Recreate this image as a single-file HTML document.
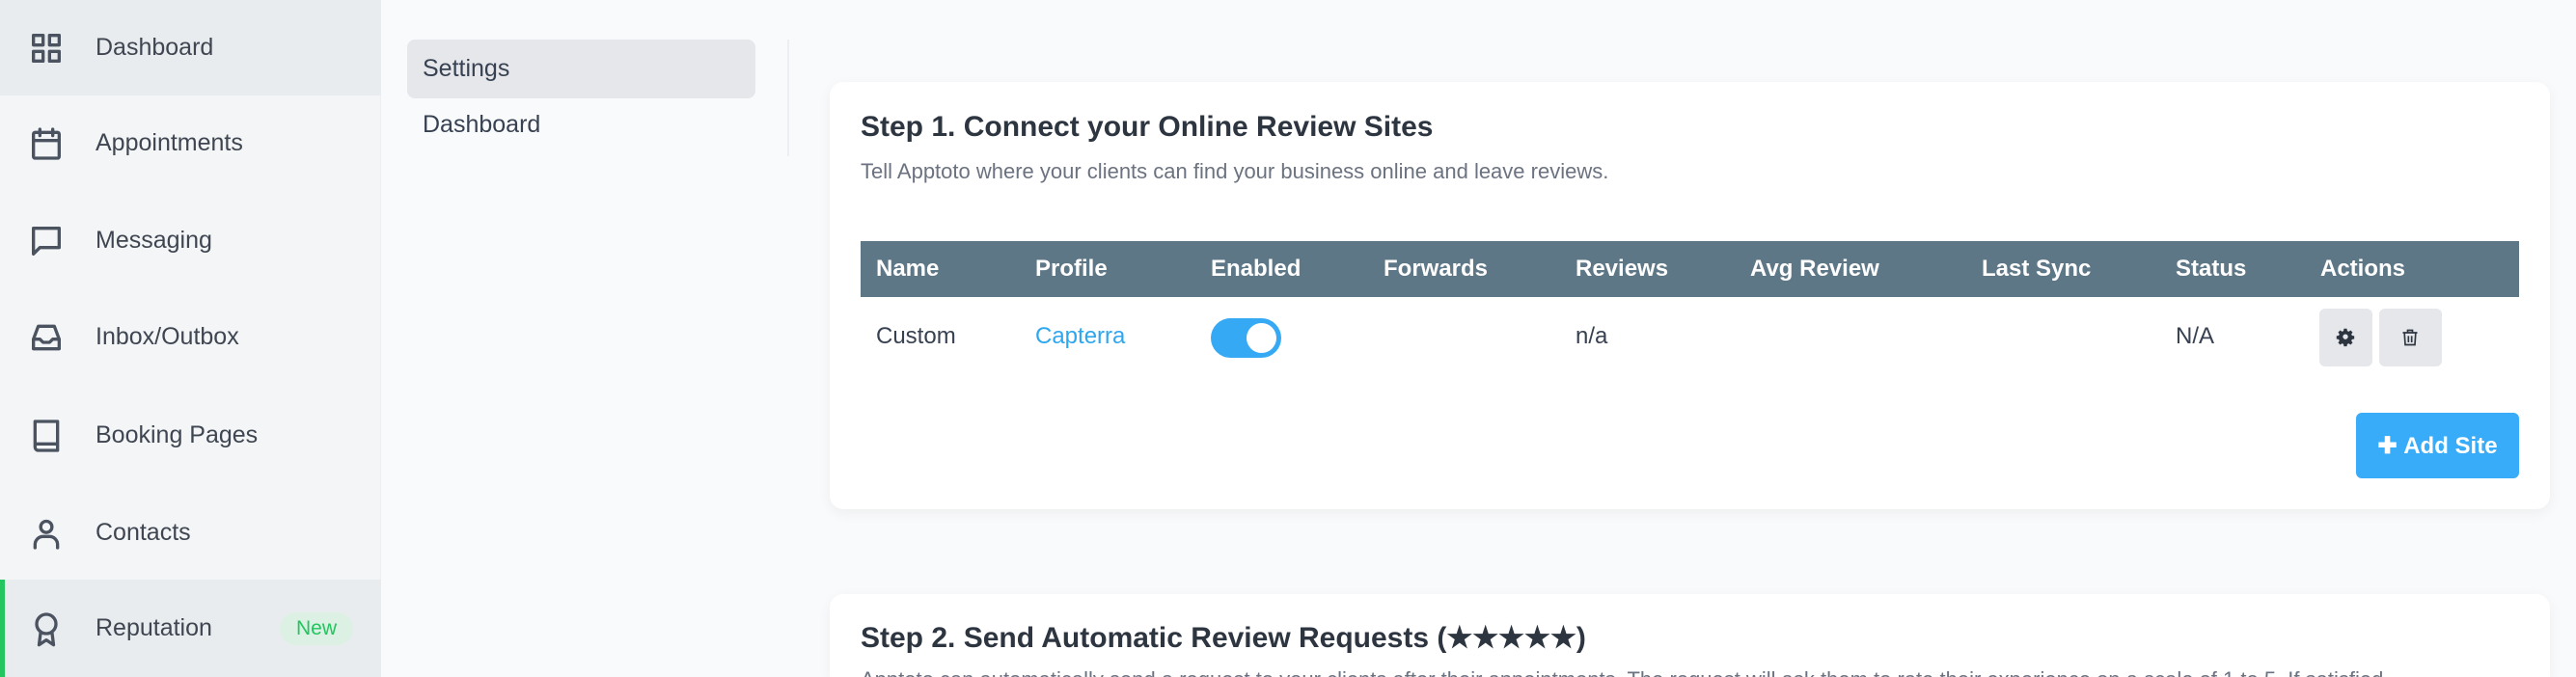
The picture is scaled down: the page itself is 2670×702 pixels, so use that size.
<!DOCTYPE html>
<html style="height:702px;overflow:hidden"><head><meta charset="utf-8"><style>
*{box-sizing:border-box;margin:0;padding:0}
body{width:2670px;height:702px;overflow:hidden;background:#f9fafb;font-family:"Liberation Sans",sans-serif;color:#374151;position:relative}
.side{position:absolute;left:0;top:0;width:395px;height:702px;background:#f3f5f7;border-right:1px solid #eceef1}
.item{position:absolute;left:0;width:395px;height:101px;display:flex;align-items:center;font-size:25px;color:#3f4651}
.item svg{position:absolute;left:28px;width:40px;height:40px;fill:none;stroke:#4b5360;stroke-width:2;stroke-linecap:round;stroke-linejoin:round}
.item span{position:absolute;left:99px}
.act{background:#e9ecef}
.badge{position:absolute;left:290px;width:76px;height:34px;border-radius:17px;background:#dcf1e3;color:#22c55e;font-size:21px;display:flex;align-items:center;justify-content:center}
.sub{position:absolute;left:422px;width:361px;height:61px;border-radius:8px;font-size:25px;display:flex;align-items:center;padding-left:16px;color:#374151}
.card{position:absolute;left:860px;width:1783px;background:#fff;border-radius:14px;box-shadow:0 4px 14px rgba(0,0,0,.05)}
h2{position:absolute;left:32px;font-size:30px;font-weight:bold;color:#2d3540}
.p{position:absolute;left:32px;font-size:22px;color:#6b7280}
.th{position:absolute;left:32px;top:165px;width:1719px;height:58px;background:#5e7787}
.th span{position:absolute;top:15px;font-size:24px;font-weight:bold;color:#fff}
.td{position:absolute;font-size:24px;color:#374151}
.btn{position:absolute;top:235px;height:60px;border-radius:6px;background:#e5e7eb}
</style></head><body>
<div class="side">
<div class="item act" style="top:0;height:99px"><svg viewBox="0 0 24 24"><rect x="4" y="4" width="6" height="6"/><rect x="14" y="4" width="6" height="6"/><rect x="4" y="14" width="6" height="6"/><rect x="14" y="14" width="6" height="6"/></svg><span>Dashboard</span></div>
<div class="item" style="top:98px"><svg viewBox="0 0 24 24"><rect x="4" y="5" width="16" height="16" rx="1"/><path d="M8 3v4M16 3v4M4 10h16"/></svg><span>Appointments</span></div>
<div class="item" style="top:199px"><svg viewBox="0 0 24 24"><path d="M4 4h16v12H8l-4 4z"/></svg><span>Messaging</span></div>
<div class="item" style="top:299px"><svg viewBox="0 0 24 24"><path d="M4 13l3-8h10l3 8v6H4zM4 13h4l2 2h4l2-2h4"/></svg><span>Inbox/Outbox</span></div>
<div class="item" style="top:401px"><svg viewBox="0 0 24 24"><path d="M5 3h14v18H7a2 2 0 0 1-2-2zM5 17h14"/></svg><span>Booking Pages</span></div>
<div class="item" style="top:502px"><svg viewBox="0 0 24 24"><circle cx="12" cy="8" r="3.5"/><path d="M5 21v-2a5 5 0 0 1 5-5h4a5 5 0 0 1 5 5v2"/></svg><span>Contacts</span></div>
<div class="item act" style="top:601px;border-left:5px solid #22c55e"><svg viewBox="0 0 24 24" style="left:23px"><circle cx="12" cy="9" r="6"/><path d="M8.5 14l-1 8 4.5-3 4.5 3-1-8"/></svg><span style="left:94px">Reputation</span><div class="badge" style="left:285px">New</div></div>
</div>
<div class="sub" style="top:41px;background:#e5e7eb">Settings</div>
<div class="sub" style="top:99px">Dashboard</div>
<div style="position:absolute;left:816px;top:41px;width:2px;height:121px;background:#eceef1"></div>

<div class="card" style="top:85px;height:443px">
<h2 style="top:30px">Step 1. Connect your Online Review Sites</h2>
<div class="p" style="top:80px">Tell Apptoto where your clients can find your business online and leave reviews.</div>
<div class="th">
<span style="left:16px">Name</span><span style="left:181px">Profile</span><span style="left:363px">Enabled</span><span style="left:542px">Forwards</span><span style="left:741px">Reviews</span><span style="left:922px">Avg Review</span><span style="left:1162px">Last Sync</span><span style="left:1363px">Status</span><span style="left:1513px">Actions</span>
</div>
<div class="td" style="left:48px;top:250px">Custom</div>
<div class="td" style="left:213px;top:250px;color:#2ea7ef">Capterra</div>
<div style="position:absolute;left:395px;top:245px;width:73px;height:41px;border-radius:21px;background:#36a9f4"><div style="position:absolute;right:5px;top:5px;width:31px;height:31px;border-radius:50%;background:#fff"></div></div>
<div class="td" style="left:773px;top:250px">n/a</div>
<div class="td" style="left:1395px;top:250px">N/A</div>
<div class="btn" style="left:1544px;width:55px"><svg viewBox="0 0 24 24" width="20" height="20" style="position:absolute;left:17px;top:20px"><path fill="#2d3540" d="M10 2h4l.5 3 2 1 2.5-1.8 2.8 2.8L20 9.5l1 2 3 .5v4l-3 .5-1 2 1.8 2.5-2.8 2.8L16.5 22l-2 1-.5 3h-4l-.5-3-2-1-2.5 1.8-2.8-2.8L4 18.5l-1-2L0 16v-4l3-.5 1-2L2.2 7 5 4.2 7.5 6l2-1z" transform="scale(.92) translate(1,-1)"/><circle cx="12" cy="11" r="3.2" fill="#e5e7eb"/></svg></div>
<div class="btn" style="left:1606px;width:65px"><svg viewBox="0 0 24 24" width="20" height="22" style="position:absolute;left:22px;top:19px" fill="none" stroke="#2d3540" stroke-width="2"><path d="M3 6h18M9 6V3h6v3M5 6l1 15h12l1-15M10 10v8M14 10v8"/></svg></div>
<div style="position:absolute;left:1582px;top:343px;width:169px;height:68px;border-radius:6px;background:#38acf8;color:#fff;font-size:24px;font-weight:bold;display:flex;align-items:center;justify-content:center">✚&nbsp;Add Site</div>
</div>

<div class="card" style="top:616px;height:86px;border-radius:14px 14px 0 0">
<h2 style="top:28px">Step 2. Send Automatic Review Requests (★★★★★)</h2>
<div class="p" style="top:76px;white-space:nowrap">Apptoto can automatically send a request to your clients after their appointments. The request will ask them to rate their experience on a scale of 1 to 5. If satisfied</div>
</div>
</body></html>
